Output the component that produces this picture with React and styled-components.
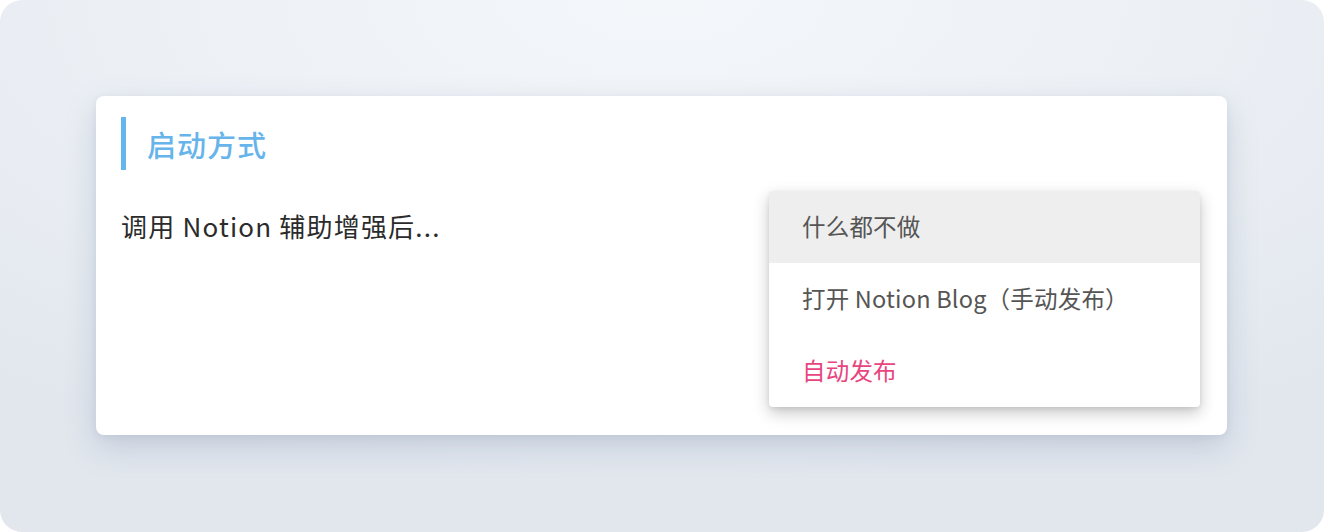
import React from "react";
import styled, { createGlobalStyle } from "styled-components";

const Global = createGlobalStyle`
  html, body { margin: 0; padding: 0; background: #ffffff; }
  body { font-family: "Noto Sans CJK SC", "Noto Sans", sans-serif; }
`;

const Frame = styled.div`
  width: 1324px;
  height: 532px;
  box-sizing: border-box;
  border-radius: 22px;
  overflow: hidden;
  padding: 96px 97px 97px 96px;
  background: radial-gradient(ellipse 80% 90% at 50% 0%, #f4f7fa 0%, #edf1f6 45%, #e2e7ee 100%);
`;

const Card = styled.div`
  position: relative;
  height: 339px;
  box-sizing: border-box;
  background: #ffffff;
  border-radius: 8px;
  padding: 21px 25px;
  box-shadow: 0 12px 30px rgba(120, 140, 170, 0.3), 0 2px 6px rgba(120, 140, 170, 0.12);
`;

const Title = styled.h2`
  margin: 0;
  height: 53px;
  display: flex;
  align-items: center;
  border-left: 5px solid #66b6ee;
  padding-left: 21px;
  font-size: 29px;
  font-weight: 500;
  color: #66b4ea;
  letter-spacing: 1px;
`;

const Label = styled.p`
  margin: 39px 0 0;
  font-size: 26px;
  line-height: 34px;
  letter-spacing: 1.2px;
  color: #2b2b2b;
`;

const Menu = styled.ul`
  position: absolute;
  left: 673px;
  top: 95px;
  width: 431px;
  margin: 0;
  padding: 0;
  list-style: none;
  background: #ffffff;
  border-radius: 4px;
  overflow: hidden;
  box-shadow: 0 6px 16px rgba(0, 0, 0, 0.22), 0 2px 4px rgba(0, 0, 0, 0.08);
`;

const Item = styled.li`
  height: 72px;
  display: flex;
  align-items: center;
  padding-left: 33px;
  padding-bottom: 2px;
  box-sizing: border-box;
  font-size: 23.5px;
  letter-spacing: 0.2px;
  color: ${(p) => (p.$selected ? "#e8457f" : "#555555")};
  background: ${(p) => (p.$active ? "#eeeeee" : "transparent")};
`;

const options = [
  { label: "什么都不做", active: true },
  { label: "打开 Notion Blog（手动发布）" },
  { label: "自动发布", selected: true },
];

export default function App() {
  return (
    <>
      <Global />
      <Frame>
        <Card>
          <Title>启动方式</Title>
          <Label>调用 Notion 辅助增强后...</Label>
          <Menu>
            {options.map((o) => (
              <Item key={o.label} $active={o.active} $selected={o.selected}>
                {o.label}
              </Item>
            ))}
          </Menu>
        </Card>
      </Frame>
    </>
  );
}
